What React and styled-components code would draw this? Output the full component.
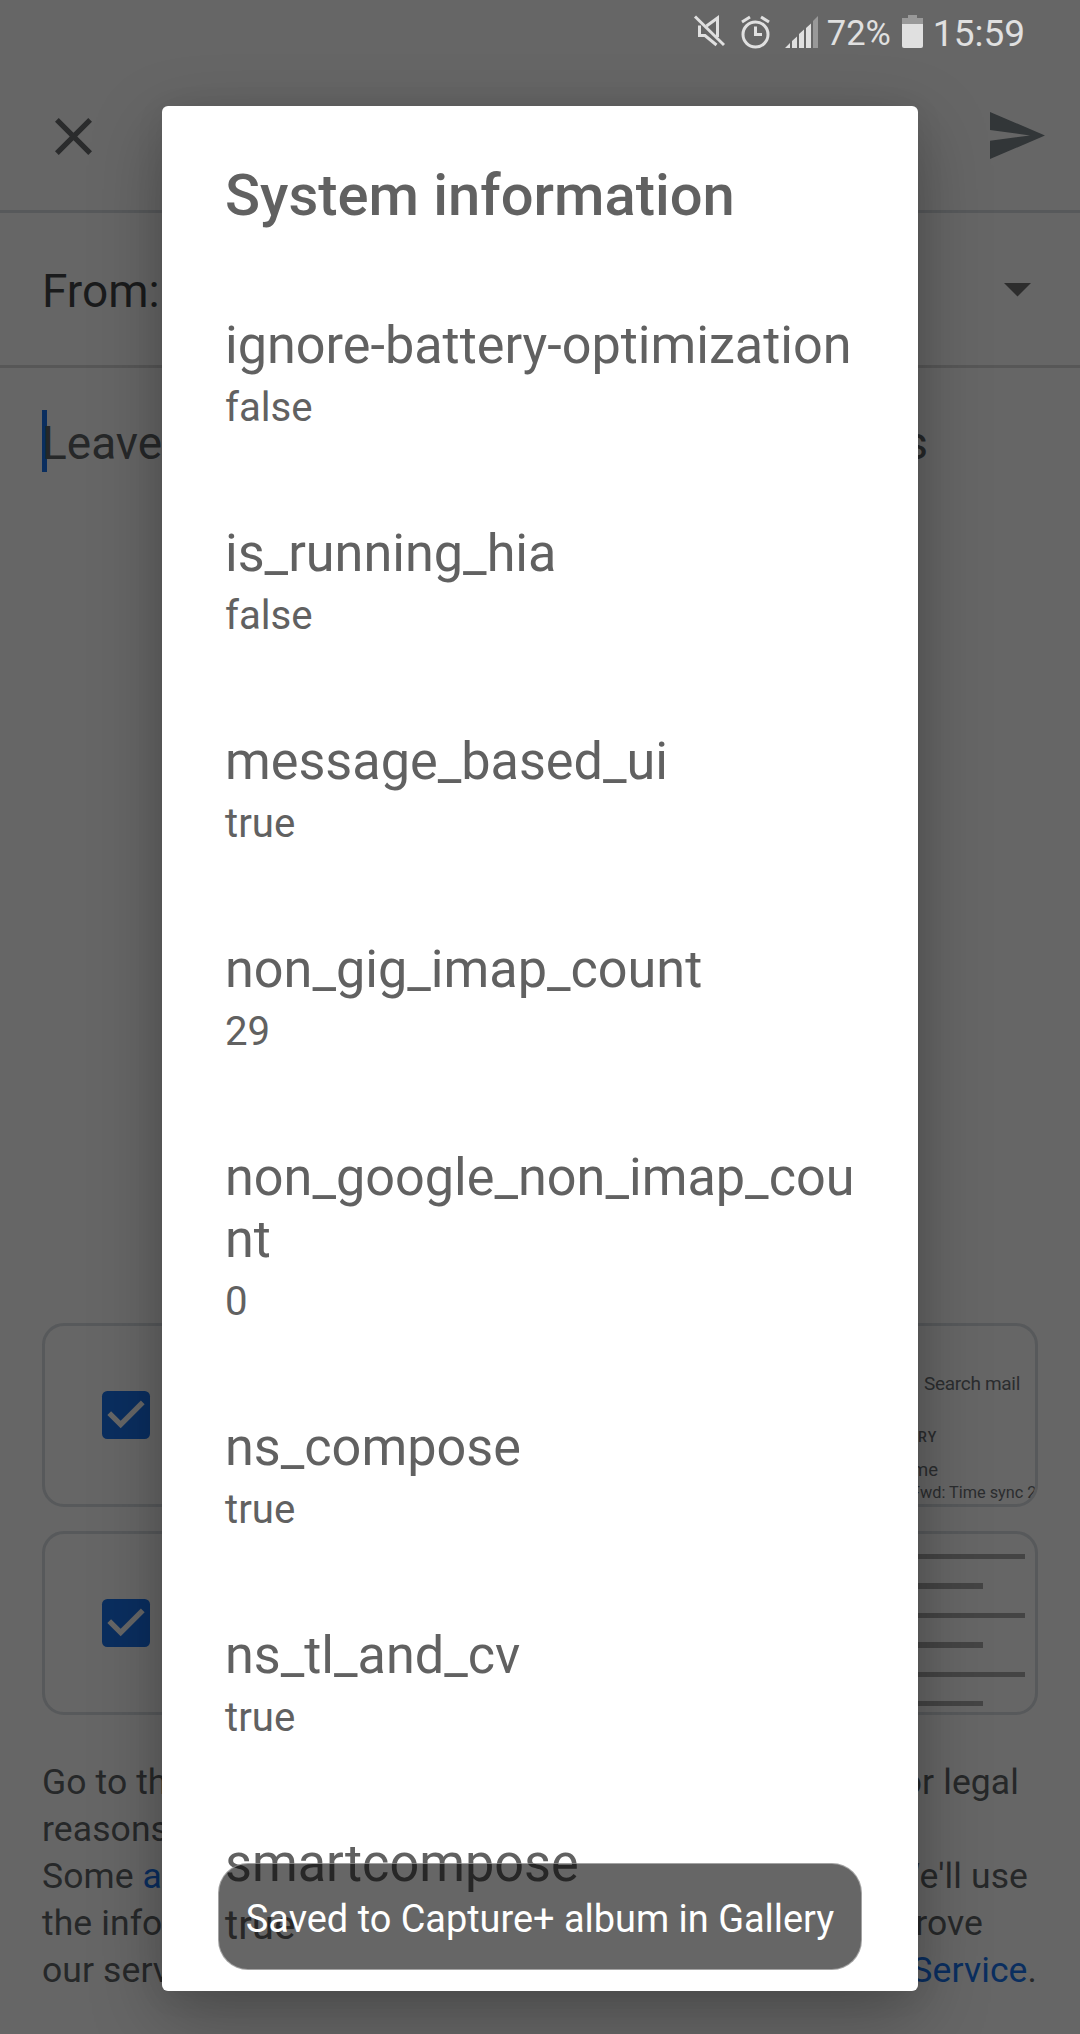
import React from "react";
import styled, { createGlobalStyle } from "styled-components";

const Global = createGlobalStyle`
  * { box-sizing: border-box; }
  html, body { margin: 0; padding: 0; background: #666; }
  body { font-family: Roboto, "Liberation Sans", sans-serif; overflow: hidden; }
`;

const Screen = styled.div`
  position: relative;
  width: 1080px;
  height: 2034px;
  overflow: hidden;
  background: #666;
  display: flex;
  flex-direction: column;
`;

const StatusBar = styled.div`
  height: 66px;
  flex: none;
  display: flex;
  align-items: flex-start;
  justify-content: flex-end;
  padding-right: 55px;
  color: #e0e0e0;
`;

const StatusText = styled.span`
  font-size: ${(p) => p.$size}px;
  line-height: 40px;
  margin: ${(p) => p.$margin};
  white-space: nowrap;
`;

const Glyph = styled.svg`
  display: block;
  flex: none;
  margin: ${(p) => p.$margin || 0};
`;

const AppBar = styled.div`
  height: 147px;
  flex: none;
  display: flex;
  align-items: flex-start;
  justify-content: space-between;
  padding: 46px 35px 0 55px;
  border-bottom: 3px solid #57595b;
`;

const FromRow = styled.div`
  height: 155px;
  flex: none;
  display: flex;
  justify-content: space-between;
  padding: 50px 49px 0 42px;
  border-bottom: 3px solid #575757;
  color: #1a1b1c;
  font-size: 46px;
  line-height: 56px;
`;

const Compose = styled.div`
  flex: none;
  height: 955px;
  display: flex;
  align-items: flex-start;
  justify-content: space-between;
  padding: 42px 152px 0 42px;
  color: #262829;
  font-size: 46px;
  line-height: 66px;
`;

const Field = styled.span`
  border-left: 5px solid #0a2e5f;
  height: 62px;
  line-height: 66px;
`;

const FieldText = styled.span`
  margin-left: -5px;
`;

const Cards = styled.div`
  flex: none;
  display: flex;
  flex-direction: column;
  gap: 24px;
  padding: 0 42px;
`;

const Card = styled.div`
  height: 184px;
  border: 3px solid #57595b;
  border-radius: 22px;
  overflow: hidden;
  display: flex;
  justify-content: space-between;
  padding-left: 49px;
`;

const Preview = styled.div`
  width: 140px;
  display: flex;
  flex-direction: column;
  color: #2b2d2f;
  white-space: nowrap;
`;

const PreviewLine = styled.span`
  font-size: ${(p) => p.$size}px;
  font-weight: ${(p) => p.$weight || 400};
  letter-spacing: ${(p) => p.$spacing || 0}px;
  line-height: 24px;
  height: 24px;
  margin: ${(p) => p.$margin};
`;

const Bars = styled.div`
  width: 140px;
  display: flex;
  flex-direction: column;
  gap: 24px;
  padding-top: 20px;
`;

const Bar = styled.div`
  height: 5.4px;
  flex: none;
  width: ${(p) => (p.$short ? 88 : 130)}px;
  background: #444;
`;

const Legal = styled.div`
  padding: 44px 42px 0;
  font-size: 35.5px;
  line-height: 47px;
  color: #262829;
`;

const LegalLine = styled.div`
  display: flex;
  justify-content: space-between;
  padding-right: ${(p) => p.$right || 0}px;
  letter-spacing: 0.1px;
  white-space: pre;
`;

const Link = styled.span`
  color: #0a2e5f;
`;

const Dialog = styled.div`
  position: absolute;
  left: 162px;
  top: 106px;
  width: 756px;
  height: 1885px;
  padding: 0 63px;
  overflow: hidden;
  background: #fff;
  border-radius: 6px;
  color: #616161;
`;

const DialogShadow = styled.div`
  position: absolute;
  left: 162px;
  top: 106px;
  width: 756px;
  height: 1885px;
  border-radius: 6px;
  box-shadow: 0 24px 72px rgba(0, 0, 0, 0.27), 0 4px 30px rgba(0, 0, 0, 0.07);
`;

const Title = styled.h1`
  margin: 56px 0 0;
  font-size: 57.9px;
  font-weight: 500;
  line-height: 67px;
  white-space: nowrap;
`;

const Entry = styled.div`
  padding-top: ${(p) => (p.$first ? 86 : 92)}px;
`;

const Label = styled.div`
  font-size: 52.2px;
  line-height: 62px;
  word-break: break-all;
  margin-right: -4px;
`;

const Value = styled.div`
  margin-top: 7px;
  font-size: 40.2px;
  line-height: 47px;
`;

const Toast = styled.div`
  position: absolute;
  left: 218px;
  top: 1863px;
  width: 644px;
  height: 107px;
  padding-top: 4px;
  display: flex;
  align-items: center;
  justify-content: center;
  border: 1px solid rgba(255, 255, 255, 0.4);
  border-radius: 30px;
  background: rgba(0, 0, 0, 0.6);
  color: #fff;
  font-size: 37.9px;
  white-space: nowrap;
`;

const entries = [
  ["ignore-battery-optimization", "false"],
  ["is_running_hia", "false"],
  ["message_based_ui", "true"],
  ["non_gig_imap_count", "29"],
  ["non_google_non_imap_count", "0"],
  ["ns_compose", "true"],
  ["ns_tl_and_cv", "true"],
  ["smartcompose", "true"],
];

const Checkbox = () => (
  <Glyph width="54" height="54" viewBox="1.875 1.875 20.25 20.25" $margin="62px 0 0 5px">
    <rect x="3" y="3" width="18" height="18" rx="2" fill="#0a2e5f" />
    <path fill="#666" d="M10 17l-5-5 1.41-1.41L10 14.17l7.59-7.59L19 8z" />
  </Glyph>
);

export default function App() {
  return (
    <Screen>
      <Global />
      <StatusBar>
        <Glyph width="32" height="32" viewBox="0 0 32 32" $margin="15px 15px 0 0" fill="none" stroke="#e0e0e0" strokeWidth="3">
          <path d="M6.500 10.500V20.500H12L23.500 30M13.500 11L24.500 3V22" />
          <path d="M2 1.500L31 30" />
        </Glyph>
        <Glyph width="30" height="34" viewBox="0 0 30 34" $margin="15px 15px 0 0" fill="none" stroke="#e0e0e0" strokeWidth="3">
          <circle cx="15.500" cy="19.500" r="12.500" />
          <path d="M15.500 11.500V19.500H22M2 7L10 2M21 2L29 7" />
        </Glyph>
        <Glyph width="33" height="32" viewBox="0 0 33 32" $margin="16px 9px 0 0" fill="#e0e0e0">
          <path d="M0 32L5 27V32zM7 25L12 20.500V32H7zM14 18L19 13.500V32H14zM21 12L26 7.500V32H21z" />
          <path fill="#999" d="M28 5L33 0V32H28z" />
        </Glyph>
        <StatusText $size="34.5" $margin="13px 11px 0 0">72%</StatusText>
        <Glyph width="21" height="33" viewBox="0 0 21 33" $margin="15px 10px 0 0">
          <path fill="#999" d="M6 0H15V3H21V10H0V3H6z" />
          <path fill="#e0e0e0" d="M0 9H21V31Q21 33 19 33H2Q0 33 0 31z" />
        </Glyph>
        <StatusText $size="37" $margin="14px 0 0 0">15:59</StatusText>
      </StatusBar>
      <AppBar>
        <Glyph width="37" height="37" viewBox="5 5 14 14" $margin="6px 0 0 0">
          <path fill="#2a2b2c" d="M19 6.410L17.590 5 12 10.590 6.410 5 5 6.410 10.590 12 5 17.590 6.410 19 12 13.410 17.590 19 19 17.590 13.410 12z" />
        </Glyph>
        <Glyph width="55" height="47" viewBox="0 0 55 47">
          <path fill="#323638" d="M0 0L55 23.500L0 47V28.700L40 23.500L0 18z" />
        </Glyph>
      </AppBar>
      <FromRow>
        <span>From:</span>
        <Glyph width="27" height="14" viewBox="0 0 27 14" $margin="20px 0 0 0">
          <path fill="#2d2d2d" d="M0 0H27L13.500 13.500z" />
        </Glyph>
      </FromRow>
      <Compose>
        <Field><FieldText>Leave</FieldText></Field>
        <span>s</span>
      </Compose>
      <Cards>
        <Card>
          <Checkbox />
          <Preview>
            <PreviewLine $size="19" $spacing="-0.3" $margin="46px 0 0 29px">Search mail</PreviewLine>
            <PreviewLine $size="14" $weight="500" $spacing="1.2" $margin="29px 0 0 23px">RY</PreviewLine>
            <PreviewLine $size="18.500" $margin="9px 0 0 17px">me</PreviewLine>
            <PreviewLine $size="16.300" $margin="-1px 0 0 16px">Fwd: Time sync 2</PreviewLine>
          </Preview>
        </Card>
        <Card>
          <Checkbox />
          <Bars>
            <Bar /><Bar $short /><Bar /><Bar $short /><Bar /><Bar $short />
          </Bars>
        </Card>
      </Cards>
      <Legal>
        <LegalLine $right={19}><span>Go to the</span><span>for legal</span></LegalLine>
        <LegalLine>reasons.</LegalLine>
        <LegalLine $right={10}><span>Some <Link>a</Link></span><span>We'll use</span></LegalLine>
        <LegalLine $right={55}><span>the info</span><span>prove</span></LegalLine>
        <LegalLine $right={1}><span>our serv</span><span><Link>Service</Link>.</span></LegalLine>
      </Legal>
      <DialogShadow />
      <Dialog>
        <Title>System information</Title>
        {entries.map(([label, value], i) => (
          <Entry key={label} $first={i === 0}>
            <Label>{label}</Label>
            <Value>{value}</Value>
          </Entry>
        ))}
      </Dialog>
      <Toast>Saved to Capture+ album in Gallery</Toast>
    </Screen>
  );
}
